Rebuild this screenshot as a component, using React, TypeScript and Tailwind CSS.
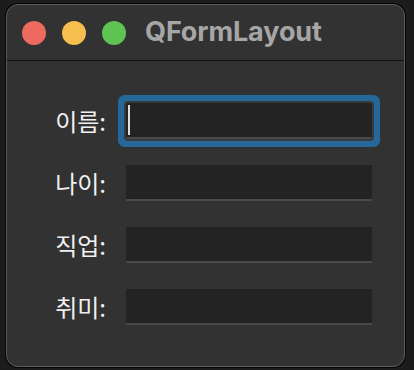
import React from "react";

const fields = [
  { label: "이름:", focused: true },
  { label: "나이:", focused: false },
  { label: "직업:", focused: false },
  { label: "취미:", focused: false },
];

const TrafficLights: React.FC = () => (
  <div className="flex items-center gap-[16px]">
    <span className="h-[24px] w-[24px] rounded-full bg-[#ee6a5f]" />
    <span className="h-[24px] w-[24px] rounded-full bg-[#f5be4f]" />
    <span className="h-[24px] w-[24px] rounded-full bg-[#5fc454]" />
  </div>
);

const App: React.FC = () => {
  return (
    <div className="h-[370px] w-[414px] bg-[#1c1c1c] pl-[6px] pt-[4px]">
      <div className="flex h-[363px] w-[399px] flex-col overflow-hidden rounded-[12px] border border-[#5c5c5c] bg-[#323232] shadow-[0_0_0_1px_#050505]">
        {/* title bar */}
        <div className="flex h-[56px] shrink-0 items-center border-b border-[#101010] pl-[15px]">
          <TrafficLights />
          <h1
            className="ml-[19px] text-[27px] font-bold tracking-[-0.1px] text-[#a6a6a6]"
            style={{ fontFamily: "Inter, 'Liberation Sans', sans-serif" }}
          >
            QFormLayout
          </h1>
        </div>

        {/* form */}
        <div
          className="grid grid-cols-[59px_246px] gap-x-[20px] gap-y-[26px] pl-[40px] pt-[42px]"
          style={{ fontFamily: "'Noto Sans CJK KR', 'Noto Sans', sans-serif" }}
        >
          {fields.map((f) => (
            <React.Fragment key={f.label}>
              <label className="flex items-center justify-end text-[24px] leading-none text-[#f0f0f0]">
                {f.label}
              </label>
              {f.focused ? (
                <div className="relative flex h-[36px] items-center rounded-[2px] border-b-2 border-[#4a4a4a] bg-[#232323] pl-[2px] shadow-[0_0_0_2px_#3a3a3a,0_0_0_8px_#25689a]">
                  <span className="h-[30px] w-[2px] bg-[#e0e0e0]" />
                </div>
              ) : (
                <div className="h-[36px] border-b-2 border-[#4a4a4a] bg-[#232323]" />
              )}
            </React.Fragment>
          ))}
        </div>
      </div>
    </div>
  );
};

export default App;
